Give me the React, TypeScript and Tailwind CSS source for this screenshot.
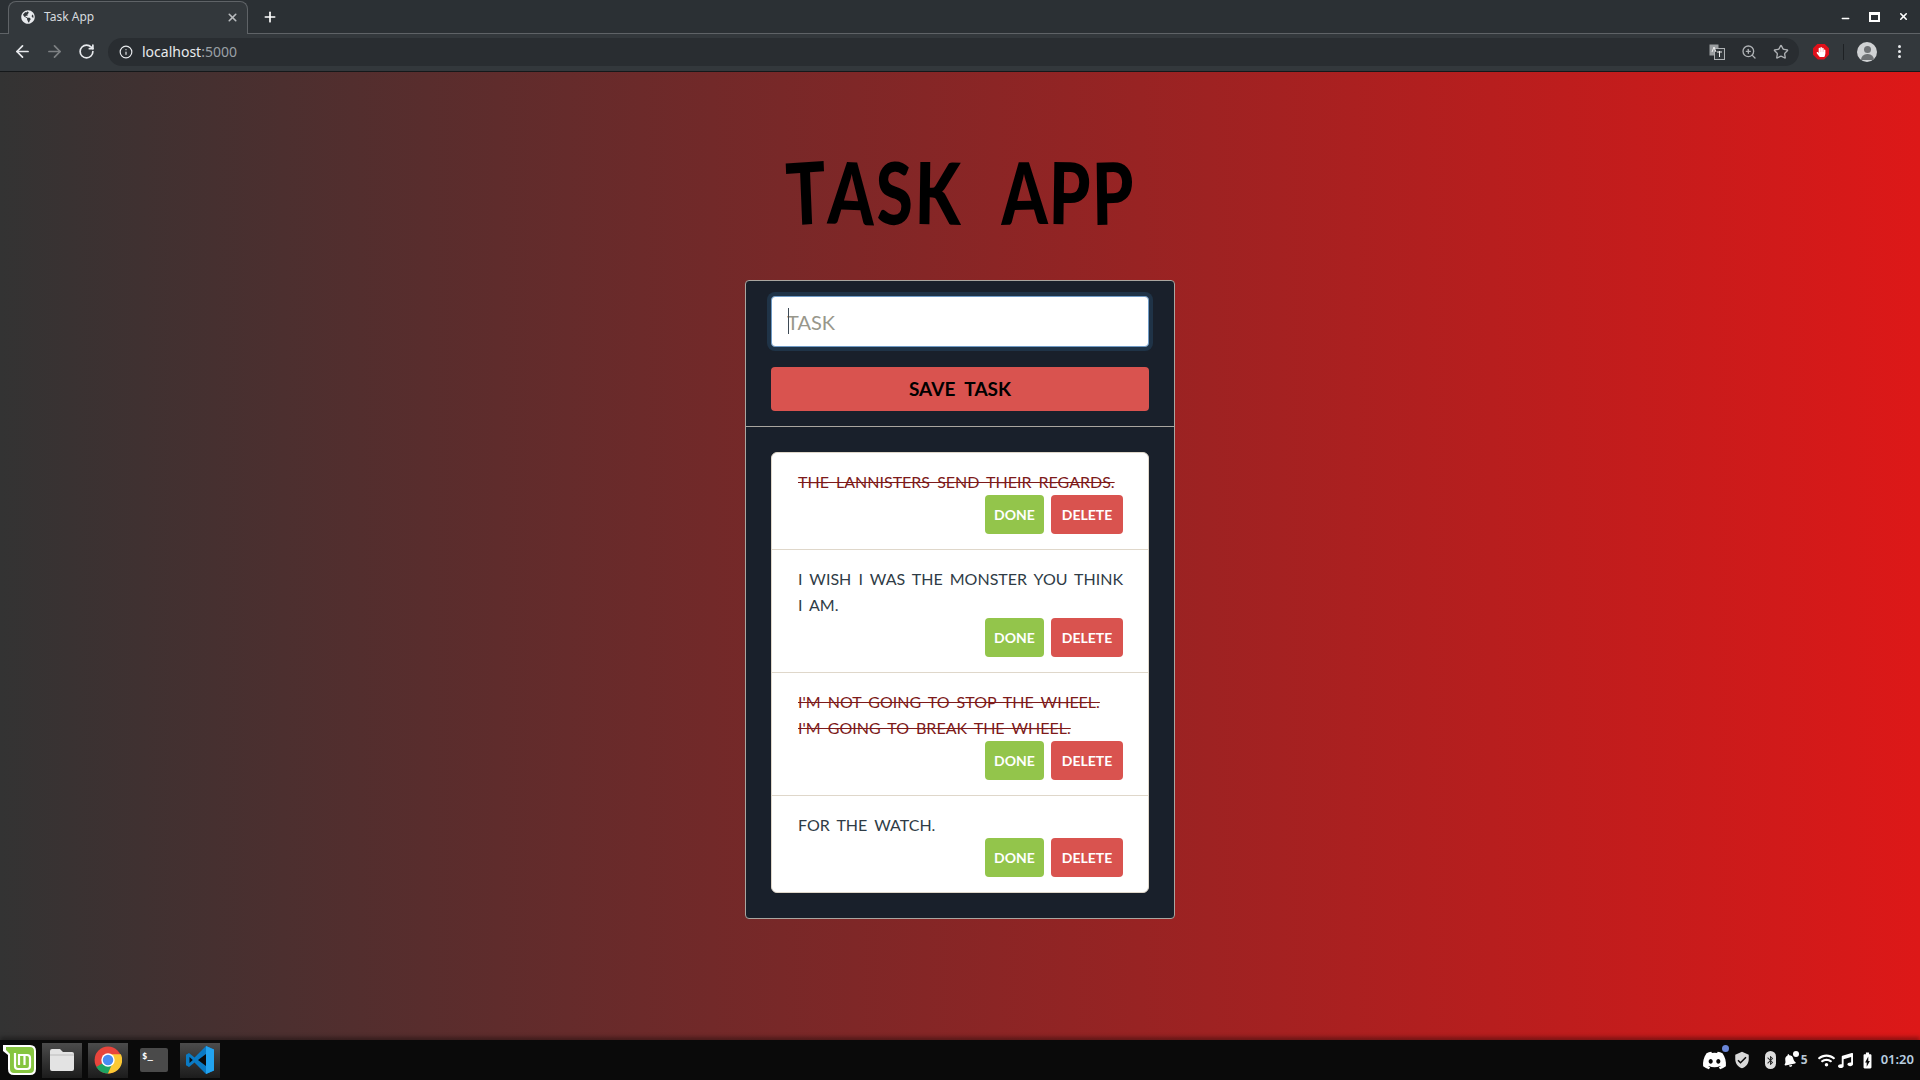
import React from "react";
import { ArrowLeft, ArrowRight, RotateCw, Info, ZoomIn, Star, X, Plus, Minus } from "lucide-react";
import { FaDiscord, FaHandPaper, FaMusic, FaBell, FaWifi, FaGlobeAmericas } from "react-icons/fa";
import { MdVerifiedUser, MdBatteryChargingFull, MdBluetooth } from "react-icons/md";

const tasks = [
  { lines: ["The Lannisters send their regards."], done: true },
  { lines: ["I wish I was the monster you think", "I am."], done: false },
  { lines: ["I'm not going to stop the wheel.", "I'm going to break the wheel."], done: true },
  { lines: ["For the watch."], done: false },
];

function Title() {
  const letters: [string, string][] = [
    ["T", "-rotate-3"], ["A", "rotate-2"], ["S", "-rotate-2"], ["K", "rotate-1"],
    [" ", ""], ["A", "-rotate-1"], ["P", "rotate-1"], ["P", "-rotate-1"],
  ];
  return (
    <h1 className="flex h-[208px] items-start justify-center pt-[72px] font-['Lato',sans-serif] text-[66px] leading-[96px] font-black text-black">
      <span className="flex scale-y-[1.3] gap-[2px]">
        {letters.map(([c, r], i) =>
          c === " " ? (
            <span key={i} className="w-[36px]" />
          ) : (
            <span key={i} className={`inline-block ${r}`}>{c}</span>
          )
        )}
      </span>
    </h1>
  );
}

function TaskItem({ lines, done, last }: { lines: string[]; done: boolean; last: boolean }) {
  return (
    <li className={`pt-4 pr-[25px] pl-[26px] pb-[15px] ${last ? "" : "border-b border-[#dfd7ca]"}`}>
      {lines.map((line) => (
        <p key={line} className={`text-[16px] leading-[26px] whitespace-nowrap [word-spacing:3px] uppercase ${done ? "text-[#7d1a1a] line-through decoration-[#7d1a1a]" : "text-[#2f3c46]"}`}>
          {line}
        </p>
      ))}
      <div className="flex justify-end gap-[7px]">
        <button className="h-[39px] w-[59px] rounded-[4px] bg-[#93c54b] text-[14px] font-bold text-white">DONE</button>
        <button className="h-[39px] w-[72px] rounded-[4px] bg-[#d9534f] text-[14px] font-bold text-white">DELETE</button>
      </div>
    </li>
  );
}

function ChromeLogo() {
  return (
    <svg width="28" height="28" viewBox="0 0 48 48">
      <circle cx="24" cy="24" r="23" fill="#e8453c" />
      <path d="M24 24 L4 36 A23 23 0 0 0 24 47 L36 24z" fill="#1da462" />
      <path d="M24 14 H46 A23 23 0 0 1 24 47 L33 26z" fill="#fcc934" />
      <circle cx="24" cy="24" r="11.5" fill="#fff" />
      <circle cx="24" cy="24" r="9" fill="#4a8cf0" />
    </svg>
  );
}

function MintLogo() {
  return (
    <svg width="35" height="32" viewBox="0 0 35 32">
      <path d="M1 1 H28 Q34 1 34 7 V25 Q34 31 28 31 H12 Q6 31 6 25 V11 L1 7z" fill="#fff" />
      <path d="M4 3 H28 Q32 3 32 7 V25 Q32 29 28 29 H12 Q8 29 8 25 V10 L4 6z" fill="#86c540" />
      <path d="M13 9 V22 Q13 25 16 25 H25 Q28 25 28 22 V14 Q28 11 25 11 H17 V21 M22.5 12 V21" fill="none" stroke="#fff" strokeWidth="2.2" />
    </svg>
  );
}

function VSCodeLogo() {
  return (
    <svg width="30" height="30" viewBox="0 0 30 30">
      <path d="M21 1 L9.5 12.5 4 8 1 9.7 V20.3 L4 22 9.5 17.5 21 29 29 25.5 V4.5z" fill="#0a7ac4" />
      <path d="M21 1 L29 4.5 V25.5 L21 29z" fill="#22a3ef" />
      <path d="M21 9 V21 L13 15z M4.5 12 V18 L7.8 15z" fill="#0a0a0a" />
    </svg>
  );
}

function Tile({ children, active }: { children: React.ReactNode; active?: boolean }) {
  return (
    <div className={`flex h-[35px] w-10 items-center justify-center ${active ? "bg-linear-to-b from-[#4c4c4c] to-[#1c1c1c]" : ""}`}>
      {children}
    </div>
  );
}

export default function App() {
  return (
    <div className="flex h-screen w-full flex-col overflow-hidden font-['Noto_Sans',sans-serif]">
      <header className="shrink-0 bg-[#33383c]">
        <div className="flex h-[34px] items-end border-b border-[#5f6367] bg-[#2b3034] pl-2">
          <div className="relative z-10 -mb-px flex h-[33px] w-[240px] items-center rounded-t-[8px] border border-b-0 border-[#5f6367] bg-[#33383c] pr-2 pl-[12px] text-[12px] text-[#d6dade]">
            <FaGlobeAmericas className="mr-[9px] -translate-y-px text-[14px] text-[#e8eaed]" />
            <span className="flex-1 -translate-y-px">Task App</span>
            <X size={13} strokeWidth={3} className="-translate-y-px text-[#b9bcbf]" />
          </div>
          <div className="flex h-[33px] items-center pl-[14px]">
            <Plus size={16} strokeWidth={2.5} className="text-white" />
          </div>
          <div className="ml-auto flex h-[33px] items-center gap-[18px] pr-[11px] text-white">
            <Minus size={11} strokeWidth={3} className="translate-y-[2px]" />
            <div className="h-[10px] w-[11px] border-2 border-t-[3px] border-white" />
            <X size={11} strokeWidth={3.5} />
          </div>
        </div>
        <div className="flex h-[38px] items-center border-b border-[#15181a] pb-[2px] pl-[13px] text-[#e8eaed]">
          <ArrowLeft size={19} strokeWidth={2.2} />
          <ArrowRight size={19} strokeWidth={2.2} className="ml-[13px] text-[#7d8083]" />
          <RotateCw size={17} strokeWidth={2.4} className="ml-[14px]" />
          <div className="ml-[13px] flex h-[28px] w-[1691px] items-center rounded-full bg-[#292d31] pr-[10px] pl-[11px]">
            <Info size={14} strokeWidth={2} />
            <span className="ml-[9px] text-[14px] leading-none">localhost<span className="text-[#9aa0a6]">:5000</span></span>
            <div className="ml-auto flex items-center gap-4 text-[#aeb1b4]">
              <svg width="16" height="16" viewBox="0 0 16 16">
                <rect x="0.5" y="0.5" width="9" height="11" fill="#9a9da0" />
                <rect x="5.5" y="4.5" width="10" height="11" fill="#33383c" stroke="#aeb1b4" />
                <path d="M3 8 L5 3 L7 8 M8 8 H13 M10.5 7 V13" stroke="#eee" fill="none" strokeWidth="1" />
              </svg>
              <ZoomIn size={16} strokeWidth={2} />
              <Star size={16} strokeWidth={2} />
            </div>
          </div>
          <div className="ml-[14px] flex h-[16px] w-[16px] items-center justify-center bg-[#e0101a] [clip-path:polygon(30%_0,70%_0,100%_30%,100%_70%,70%_100%,30%_100%,0_70%,0_30%)]">
            <FaHandPaper className="text-[10px] text-white" />
          </div>
          <div className="ml-[14px] h-[16px] w-px bg-[#1e2124]" />
          <div className="relative ml-[13px] h-[20px] w-[20px] overflow-hidden rounded-full bg-[#d0d2d4]">
            <div className="mx-auto mt-[4px] h-[7px] w-[7px] rounded-full bg-[#6e7174]" />
            <div className="mx-auto mt-[1px] h-[6px] w-[13px] rounded-t-full bg-[#6e7174]" />
          </div>
          <div className="ml-[21px] flex flex-col gap-[2px]">
            <div className="h-[3px] w-[3px] rounded-full bg-[#e8eaed]" />
            <div className="h-[3px] w-[3px] rounded-full bg-[#e8eaed]" />
            <div className="h-[3px] w-[3px] rounded-full bg-[#e8eaed]" />
          </div>
        </div>
      </header>

      <main className="min-h-0 flex-1 bg-[linear-gradient(to_right,#333333,#dd1818)] font-['Lato',sans-serif]">
        <Title />
        <section className="mx-auto w-[430px] rounded-[4px] border border-[#a9a6a0] bg-[#19202b]">
          <div className="border-b border-[#a9a6a0] px-[25px] pt-[15px] pb-[15px]">
            <div className="relative">
              <input
                placeholder="TASK"
                className="h-[51px] w-full rounded-[4px] border border-[#6f9ac5] bg-white px-[15px] text-[20px] shadow-[0_0_0_4px_#1f3347] outline-none placeholder:text-[#98978b]"
              />
              <div className="absolute top-[12px] left-[17px] h-[26px] w-px bg-[#3e4a55]" />
            </div>
            <button className="mt-[20px] h-[44px] w-full rounded-[4px] bg-[#d9534f] pt-px text-[19px] font-bold [word-spacing:5px] text-black">SAVE TASK</button>
          </div>
          <div className="px-[25px] pt-[25px] pb-[25px]">
            <ul className="rounded-[6px] border border-[#dfd7ca] bg-white">
              {tasks.map((t, i) => (
                <TaskItem key={i} lines={t.lines} done={t.done} last={i === tasks.length - 1} />
              ))}
            </ul>
          </div>
        </section>
      </main>

      <footer className="flex h-[40px] shrink-0 items-center bg-[#0a0a0a] pl-[2px] shadow-[0_-3px_4px_rgba(0,0,0,0.35)]">
        <MintLogo />
        <div className="ml-[5px] flex items-center gap-[6px]">
          <Tile active>
            <svg width="26" height="24" viewBox="0 0 26 24">
              <path d="M1 3 Q1 1 3 1 H11 L14 4 H23 Q25 4 25 6 V21 Q25 23 23 23 H3 Q1 23 1 21z" fill="#e3e3e3" />
              <path d="M1 7 H25" stroke="#bbb" strokeWidth="1" />
            </svg>
          </Tile>
          <Tile active><ChromeLogo /></Tile>
          <Tile>
            <div className="h-[24px] w-[28px] rounded-[2px] bg-[#4a4a4a] pl-[2px] font-['DejaVu_Sans_Mono',monospace] text-[9px] leading-[16px] font-bold text-white">$_</div>
          </Tile>
          <Tile active><VSCodeLogo /></Tile>
        </div>
        <div className="ml-auto flex items-center pr-[6px] text-white">
          <div className="relative">
            <FaDiscord className="text-[25px]" />
            <div className="absolute -top-[3px] right-[-2px] h-[7px] w-[7px] rounded-full bg-[#6a86d8]" />
          </div>
          <MdVerifiedUser className="ml-[6px] text-[18px] text-[#d9d9d9]" />
          <div className="ml-[14px] flex h-[18px] w-[11px] items-center justify-center rounded-full bg-[#dedede]">
            <MdBluetooth className="text-[13px] text-[#222]" />
          </div>
          <div className="relative ml-[7px]">
            <FaBell className="-rotate-12 text-[13px]" />
            <div className="absolute -top-[3px] -right-[3px] h-[6px] w-[6px] rounded-full bg-white" />
          </div>
          <span className="ml-[5px] text-[12px] font-bold text-[#b9c6d2]">5</span>
          <FaWifi className="ml-[10px] text-[17px]" />
          <FaMusic className="ml-[3px] text-[15px]" />
          <MdBatteryChargingFull className="ml-[5px] text-[19px]" />
          <span className="ml-[4px] text-[13px] font-semibold text-[#b9cfe0]">01:20</span>
        </div>
      </footer>
    </div>
  );
}
